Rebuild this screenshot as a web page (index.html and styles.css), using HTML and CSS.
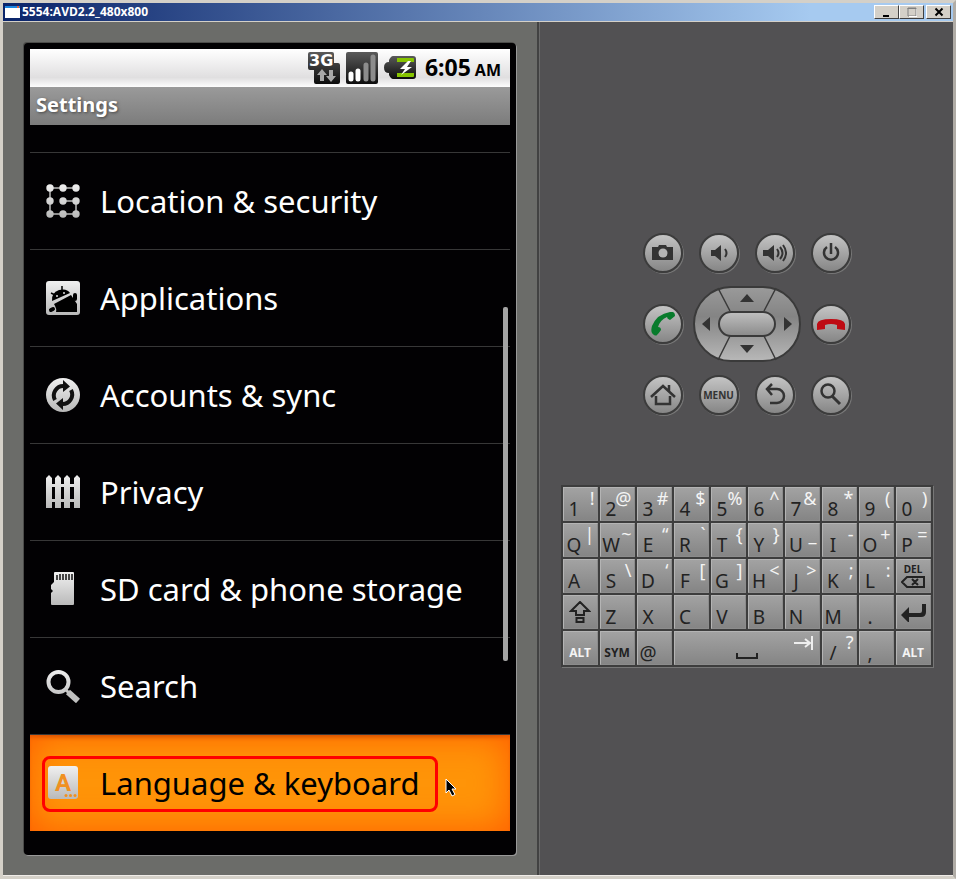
FILE: index.html
```
<!DOCTYPE html>
<html lang="en">
<head>
    <meta charset="UTF-8">
    <meta name="viewport" content="width=device-width, initial-scale=1.0">
    <title>5554:AVD2.2_480x800</title>
    <link rel="stylesheet" href="styles.css">
</head>
<body>
    <!-- shared gradients -->
    <svg class="defs" width="0" height="0" aria-hidden="true">
        <defs>
            <linearGradient id="silver" gradientUnits="userSpaceOnUse" x1="0" y1="0" x2="0" y2="34">
                <stop offset="0" stop-color="#f0f0f0"/>
                <stop offset="1" stop-color="#b8b8b8"/>
            </linearGradient>
            <linearGradient id="dark" x1="0" y1="0" x2="0" y2="1">
                <stop offset="0" stop-color="#5a5a5a"/>
                <stop offset="1" stop-color="#0c0c0c"/>
            </linearGradient>
            <linearGradient id="pad" x1="0" y1="0" x2="0" y2="1">
                <stop offset="0" stop-color="#9a9a9a"/>
                <stop offset="0.4" stop-color="#848484"/>
                <stop offset="1" stop-color="#b8b8b8"/>
            </linearGradient>
            <linearGradient id="pad-center" x1="0" y1="0" x2="0" y2="1">
                <stop offset="0" stop-color="#c0c0c0"/>
                <stop offset="1" stop-color="#8a8a8a"/>
            </linearGradient>
        </defs>
    </svg>

    <div class="window">
        <header class="titlebar">
            <svg class="app-icon" width="16" height="14" viewBox="0 0 16 14">
                <rect x="0" y="1" width="15" height="12" fill="#fff"/>
                <rect x="0" y="1" width="15" height="2" fill="#1c86e0"/>
                <rect x="12" y="1" width="2" height="2" fill="#e0603c"/>
            </svg>
            <span class="caption">5554:AVD2.2_480x800</span>
            <div class="window-buttons">
                <button aria-label="Minimize"><svg width="10" height="10"><rect x="1" y="8" width="6" height="2" fill="#000"/></svg></button>
                <button aria-label="Maximize"><svg width="10" height="10"><path d="M1 1h8v8h-8z" fill="none" stroke="#808080" stroke-width="1"/><path d="M0.5 1.5h9" stroke="#808080"/><path d="M2 9.5h8v-8" fill="none" stroke="#fff"/></svg></button>
                <button class="close" aria-label="Close"><svg width="10" height="10"><path d="M1.500 1.500l7 7M8.500 1.500l-7 7" stroke="#000" stroke-width="2"/></svg></button>
            </div>
        </header>

        <main class="emulator">
            <!-- phone -->
            <section class="phone-side">
                <div class="phone">
                    <div class="screen">
                        <div class="statusbar">
                            <svg width="32" height="32" viewBox="0 0 32 32">
                                <path d="M2 0h22q2 0 2 2v9h4q2 0 2 2v17q0 2-2 2h-22q-2 0-2-2v-12h-4q-2 0-2-2v-14q0-2 2-2z" fill="url(#dark)"/>
                                <text x="1" y="14" class="label-3g">3G</text>
                                <path d="M14 17l5 6h-3v6h-4v-6h-3zM23 30l-5-6h3v-6h4v6h3z" fill="#a8a8a8"/>
                            </svg>
                            <svg width="32" height="32" viewBox="0 0 32 32">
                                <rect width="32" height="32" rx="2" fill="url(#dark)"/>
                                <g stroke-width="5" stroke-linecap="round">
                                    <path d="M5 27v-5M12 27v-8" stroke="#fff"/>
                                    <path d="M20 27v-14M27 27v-22" stroke="#8c8c8c"/>
                                </g>
                            </svg>
                            <svg width="32" height="32" viewBox="0 0 32 32">
                                <path d="M9 4h20q3 0 3 3v17q0 3-3 3h-20q-2 0-4-4v-2q-5 0-5-5.500t5-5.500v-2q2-4 4-4z" fill="url(#dark)"/>
                                <path d="M13 6h16q1 0 1 1v3h-17zM13 21h17v3q0 1-1 1h-16z" fill="#86c400"/>
                                <path d="M24 9l-8 8h5l-4 6 11-8h-5l4-6z" fill="#fff"/>
                            </svg>
                            <div class="clock">6:05<small>AM</small></div>
                        </div>
                        <h1>Settings</h1>
                        <ul class="settings">
                            <li>
                                <a href="#">
                                    <svg width="34" height="34" viewBox="0 0 34 34">
                                        <path d="M4 4h26M4 4v26h26v-13h-13" fill="none" stroke="#bbb" stroke-width="1.500"/>
                                        <g fill="url(#silver)">
                                            <circle cx="4" cy="4" r="3.700"/><circle cx="17" cy="4" r="3.700"/><circle cx="30" cy="4" r="3.700"/>
                                            <circle cx="4" cy="17" r="3.700"/><circle cx="17" cy="17" r="3.700"/><circle cx="30" cy="17" r="3.700"/>
                                            <circle cx="4" cy="30" r="3.700"/><circle cx="17" cy="30" r="3.700"/><circle cx="30" cy="30" r="3.700"/>
                                        </g>
                                    </svg>
                                    Location &amp; security
                                </a>
                            </li>
                            <li>
                                <a href="#">
                                    <svg width="34" height="34" viewBox="0 0 34 34">
                                        <rect width="34" height="34" rx="3" fill="url(#silver)"/>
                                        <path d="M6 20q-1-8 7-11 8-2 11 3z"/>
                                        <path d="M8 23l17-9 6 9v8h-21q1-3-2-8z"/>
                                        <path d="M5 12l4 2M16 5v4" stroke="#000" stroke-width="1.500"/>
                                        <path d="M5 29l2-1M29 14v4" stroke="#000" stroke-width="4" stroke-linecap="round"/>
                                        <circle cx="11" cy="15" r="1" fill="#ddd"/><circle cx="18" cy="12" r="1" fill="#ddd"/>
                                    </svg>
                                    Applications
                                </a>
                            </li>
                            <li>
                                <a href="#">
                                    <svg width="34" height="34" viewBox="0 0 34 34">
                                        <circle cx="17" cy="17" r="17" fill="url(#silver)"/>
                                        <path d="M9 22a9.500 9.500 0 0 1 9-14M25 12a9.500 9.500 0 0 1-9 14" fill="none" stroke="#111" stroke-width="4"/>
                                        <path d="M17 2l7 6.500-7 5.500zM17 32l-7-6.500 7-5.500z" fill="#111"/>
                                    </svg>
                                    Accounts &amp; sync
                                </a>
                            </li>
                            <li>
                                <a href="#">
                                    <svg width="34" height="34" viewBox="0 0 34 34">
                                        <path fill="url(#silver)" d="M0 33v-30l3-3 3 3v30zM9 33v-30l3-3 3 3v30zM18 33v-30l3-3 3 3v30zM28 33v-30l3-3 3 3v30zM3 9h28v3h-28zM3 24h28v3h-28z"/>
                                    </svg>
                                    Privacy
                                </a>
                            </li>
                            <li>
                                <a href="#">
                                    <svg width="34" height="34" viewBox="0 0 34 34">
                                        <path fill="url(#silver)" d="M9 0h18q1 0 1 1v31q0 1-1 1h-21q-1 0-1-1v-11l2-2-2-2v-4l3-3v-9q0-1 1-1z"/>
                                        <path d="M11 3v5M14 2v6M17 2v6M20 2v6M23 2v6M26 2v6" stroke="#111" stroke-width="1.500"/>
                                    </svg>
                                    SD card &amp; phone storage
                                </a>
                            </li>
                            <li>
                                <a href="#">
                                    <svg width="34" height="34" viewBox="0 0 34 34">
                                        <circle cx="12.500" cy="13" r="10" fill="none" stroke="url(#silver)" stroke-width="4"/>
                                        <path d="M19 20l4 4" stroke="#c8c8c8" stroke-width="3"/>
                                        <path d="M22 23l10 9" stroke="#c0c0c0" stroke-width="6"/>
                                    </svg>
                                    Search
                                </a>
                            </li>
                            <li class="selected">
                                <a href="#">
                                    <svg width="34" height="34" viewBox="0 0 34 34">
                                        <rect x="2" y="0" width="30" height="33" rx="3" fill="url(#silver)"/>
                                        <text x="17" y="25" text-anchor="middle" class="label-a">A</text>
                                        <g fill="#f09020"><circle cx="20" cy="29.500" r="1.500"/><circle cx="24.500" cy="29.500" r="1.500"/><circle cx="29" cy="29.500" r="1.500"/></g>
                                    </svg>
                                    Language &amp; keyboard
                                </a>
                                <div class="marker"></div>
                                <svg class="pointer" width="13" height="20" viewBox="0 0 13 20">
                                    <path d="M1 1v14l3-3 3 6 3-1.500-3-5.500h4z" fill="#000" stroke="#fff"/>
                                </svg>
                            </li>
                        </ul>
                        <div class="scroll-thumb"></div>
                    </div>
                </div>
            </section>

            <!-- hardware buttons and keyboard -->
            <section class="hardware">
                <div class="controls">
                    <button class="round" aria-label="Camera">
                        <svg width="24" height="24" viewBox="0 0 24 24"><path d="M1 6h6l1-2h7l1 2h6v13h-21z"/><circle cx="12" cy="12" r="4.500" fill="#b4b4b4"/></svg>
                    </button>
                    <button class="round" aria-label="Volume down">
                        <svg width="24" height="24" viewBox="0 0 24 24"><path d="M4 9h4l6-5v16l-6-5h-4z"/><path d="M18 8q3 4 0 8" fill="none" stroke="#333" stroke-width="2"/></svg>
                    </button>
                    <button class="round" aria-label="Volume up">
                        <svg width="24" height="24" viewBox="0 0 24 24"><path d="M0 9h5l6-5v16l-6-5h-5z"/><path d="M14 8q3 4 0 8M17 6q5 6 0 12M20 4q6 8 0 16" fill="none" stroke="#333" stroke-width="2"/></svg>
                    </button>
                    <button class="round" aria-label="Power">
                        <svg width="24" height="24" viewBox="0 0 24 24"><path d="M8 6a7 7 0 1 0 8 0M12 2v11" fill="none" stroke="#333" stroke-width="2.500"/></svg>
                    </button>

                    <button class="round" aria-label="Call">
                        <svg width="24" height="24" viewBox="0 0 24 24"><path d="M3 23Q-1 21 1 14 6 2 19 0q5-1 5 4l-5 4q-3-1-3-3Q9 8 7 15q3 0 3 3-2 3-4 5-1 1-3 0z" fill="#087b2c"/></svg>
                    </button>
                    <div class="dpad">
                        <svg class="dpad-shape" width="108" height="76" viewBox="0 0 108 76">
                            <rect x="1" y="1" width="106" height="74" rx="37" fill="url(#pad)" stroke="#3a3a3a" stroke-width="2"/>
                            <path d="M25 2l12 23M83 2l-12 23M25 74l12-24M83 74l-12-24" stroke="#3a3a3a" stroke-width="1.500"/>
                            <rect x="26" y="26" width="56" height="24" rx="12" fill="url(#pad-center)" stroke="#3a3a3a" stroke-width="2"/>
                        </svg>
                        <button class="up" aria-label="Up"><svg width="14" height="8"><path d="M0 8l7-8 7 8z"/></svg></button>
                        <button class="left" aria-label="Left"><svg width="8" height="14"><path d="M8 0l-8 7 8 7z"/></svg></button>
                        <button class="ok" aria-label="Center"></button>
                        <button class="right" aria-label="Right"><svg width="8" height="14"><path d="M0 0l8 7-8 7z"/></svg></button>
                        <button class="down" aria-label="Down"><svg width="14" height="8"><path d="M0 0l7 8 7-8z"/></svg></button>
                    </div>
                    <button class="round" aria-label="End call">
                        <svg width="28" height="24" viewBox="0 0 28 24"><path d="M0 12Q1 7 14 7t14 5v6l-8-1v-4q-6-2-12 0v4l-8 1z" fill="#be0b14"/></svg>
                    </button>

                    <button class="round" aria-label="Home">
                        <svg width="26" height="24" viewBox="0 0 26 24"><path d="M1 14l12-11 12 11M19 8v-6M6 13v8h14v-8" fill="none" stroke="#333" stroke-width="2.500"/></svg>
                    </button>
                    <button class="round">MENU</button>
                    <button class="round" aria-label="Back">
                        <svg width="24" height="24" viewBox="0 0 24 24"><path d="M9 1l-5 5 5 6M4 6h10a7 7 0 0 1 0 14h-7" fill="none" stroke="#333" stroke-width="2.500"/></svg>
                    </button>
                    <button class="round" aria-label="Search">
                        <svg width="24" height="24" viewBox="0 0 24 24"><circle cx="9" cy="8" r="6.500" fill="none" stroke="#333" stroke-width="2.500"/><path d="M13 13l8 8" stroke="#333" stroke-width="3"/></svg>
                    </button>
                </div>

                <div class="keyboard">
                    <button><b>1</b><i>!</i></button>
                    <button><b>2</b><i>@</i></button>
                    <button><b>3</b><i>#</i></button>
                    <button><b>4</b><i>$</i></button>
                    <button><b>5</b><i>%</i></button>
                    <button><b>6</b><i>^</i></button>
                    <button><b>7</b><i>&amp;</i></button>
                    <button><b>8</b><i>*</i></button>
                    <button><b>9</b><i>(</i></button>
                    <button><b>0</b><i>)</i></button>

                    <button><b>Q</b><i>|</i></button>
                    <button><b>W</b><i>~</i></button>
                    <button><b>E</b><i>“</i></button>
                    <button><b>R</b><i>`</i></button>
                    <button><b>T</b><i>{</i></button>
                    <button><b>Y</b><i>}</i></button>
                    <button><b>U</b><i>_</i></button>
                    <button><b>I</b><i>-</i></button>
                    <button><b>O</b><i>+</i></button>
                    <button><b>P</b><i>=</i></button>

                    <button><b>A</b></button>
                    <button><b>S</b><i>\</i></button>
                    <button><b>D</b><i>‘</i></button>
                    <button><b>F</b><i>[</i></button>
                    <button><b>G</b><i>]</i></button>
                    <button><b>H</b><i>&lt;</i></button>
                    <button><b>J</b><i>&gt;</i></button>
                    <button><b>K</b><i>;</i></button>
                    <button><b>L</b><i>:</i></button>
                    <button class="del">
                        DEL
                        <svg width="24" height="12" viewBox="0 0 24 12"><path d="M1 6l5-5h17v10h-17zM11 3l6 6M17 3l-6 6" fill="none" stroke="#222" stroke-width="2"/></svg>
                    </button>

                    <button class="icon-key" aria-label="Shift">
                        <svg width="22" height="22" viewBox="0 0 22 22"><path d="M11 1l9 9h-5v4h-8v-4h-5zM7.500 17h7v4h-7z" fill="none" stroke="#222" stroke-width="2"/></svg>
                    </button>
                    <button><b>Z</b></button>
                    <button><b>X</b></button>
                    <button><b>C</b></button>
                    <button><b>V</b></button>
                    <button><b>B</b></button>
                    <button><b>N</b></button>
                    <button><b>M</b></button>
                    <button><b>.</b></button>
                    <button class="icon-key" aria-label="Enter">
                        <svg width="26" height="20" viewBox="0 0 26 20"><path d="M1 13l8-8v6h11q2 0 2-2v-7h4v8q0 5-5 5h-12v6z" fill="#222"/></svg>
                    </button>

                    <button class="word light">ALT</button>
                    <button class="word">SYM</button>
                    <button><b>@</b></button>
                    <button class="space" aria-label="Space">
                        <svg width="22" height="6" viewBox="0 0 22 6"><path d="M1 0v5h20v-5" fill="none" stroke="#222" stroke-width="2"/></svg>
                        <svg class="tab" width="20" height="14" viewBox="0 0 20 14"><path d="M0 7h15M11 3l5 4-5 4M18 0v14" fill="none" stroke="#eee" stroke-width="2"/></svg>
                    </button>
                    <button><b>/</b><i>?</i></button>
                    <button><b>,</b></button>
                    <button class="word light">ALT</button>
                </div>
            </section>
        </main>
    </div>
</body>
</html>
```

FILE: styles.css
```
* {
    box-sizing: border-box;
}

body {
    margin: 0;
    font-family: "Noto Sans", "Open Sans", sans-serif;
    background-color: #d4d0c8;
}

button {
    margin: 0;
    padding: 0;
    font-family: inherit;
    cursor: pointer;
}

svg {
    display: block;
    flex: none;
}

.defs {
    position: absolute;
}

.window {
    display: flex;
    flex-direction: column;
    min-height: 100vh;
    border: 3px solid #d4d0c8;
    border-right-color: #b0aca6;
}

/* title bar */
.titlebar {
    display: flex;
    align-items: center;
    height: 19px;
    padding: 0 2px;
    background: linear-gradient(to right, #0a246a, #a6caf0 85%);
    border-bottom: 1px solid #d4d0c8;
}

.caption {
    flex: 1;
    margin-left: 1px;
    color: #fff;
    font: bold 12px/18px "Open Sans", "Noto Sans", sans-serif;
}

.window-buttons {
    display: flex;
}

.window-buttons button {
    display: flex;
    align-items: center;
    justify-content: center;
    width: 25px;
    height: 14px;
    background-color: #d4d0c8;
    border: 1px solid;
    border-color: #fff #404040 #404040 #fff;
}

.window-buttons .close {
    margin-left: 2px;
}

.emulator {
    display: flex;
    flex: 1;
    border-bottom: 1px solid #f0ece8;
}

/* phone */
.phone-side {
    padding: 21px 21px 20px;
    background-color: #6b6c69;
    border-right: 2px solid #424242;
}

.phone {
    padding: 6px;
    background-color: #020103;
    border-radius: 4px;
    box-shadow: 1px 1px 0 #999, -1px -1px 0 #4c4c4a;
}

.screen {
    position: relative;
    width: 480px;
    padding-bottom: 18px;
}

.statusbar {
    display: flex;
    align-items: center;
    justify-content: flex-end;
    gap: 6px;
    height: 38px;
    padding-right: 9px;
    background: linear-gradient(#fff, #e0dfe0 75%, #fdfdfd);
}

.label-3g {
    fill: #fff;
    font: bold 16px "DejaVu Sans", sans-serif;
}

.label-a {
    fill: #f09020;
    font: bold 24px Roboto, sans-serif;
}

.clock {
    margin-left: 3px;
    font-size: 23px;
    font-weight: bold;
    line-height: 40px;
}

.clock small {
    margin-left: 4px;
    font-size: 16px;
}

h1 {
    margin: 0;
    padding: 0 6px;
    height: 38px;
    color: #fff;
    font-size: 20px;
    line-height: 36px;
    text-shadow: 1px 1px 3px #444;
    background: linear-gradient(#9a9a9a, #7c7c7c);
}

.settings {
    margin: 0;
    padding: 27px 0 0;
    list-style: none;
}

.settings li {
    position: relative;
    border-top: 1px solid #373737;
}

.settings a {
    display: flex;
    align-items: center;
    gap: 20px;
    height: 96px;
    padding: 0 16px;
    color: #fff;
    font-size: 31px;
    white-space: nowrap;
    text-decoration: none;
}

.settings .selected {
    background-color: #ff9408;
    box-shadow: inset 0 0 36px #ff5c00, inset 0 4px 4px -2px #a84000;
}

.selected a {
    color: #000;
}

.marker {
    position: absolute;
    top: 21px;
    left: 12px;
    width: 396px;
    height: 56px;
    border: 3px solid #f00;
    border-radius: 8px;
}

.pointer {
    position: absolute;
    top: 43px;
    left: 415px;
}

.scroll-thumb {
    position: absolute;
    top: 258px;
    right: 2px;
    width: 5px;
    height: 354px;
    background-color: #a4a4a4;
    border-radius: 2px;
}

/* hardware side */
.hardware {
    display: flex;
    flex: 1;
    flex-direction: column;
    align-items: center;
    justify-content: center;
    gap: 70px;
    padding-top: 2px;
    background-color: #525153;
    border-left: 1px solid #6a6a6a;
}

.controls {
    display: grid;
    grid-template-columns: repeat(4, 56px);
    row-gap: 13px;
    align-items: center;
    justify-items: center;
}

.round {
    display: flex;
    align-items: center;
    justify-content: center;
    width: 40px;
    height: 40px;
    color: #333;
    font-size: 10px;
    font-weight: bold;
    background: linear-gradient(#c4c4c4, #868686);
    border: 2px solid #3c3c3c;
    border-radius: 50%;
    box-shadow: 1px 1px 0 #777;
}

.round svg,
.dpad button svg {
    fill: #333;
}

.dpad {
    position: relative;
    display: grid;
    grid-column: span 2;
    grid-template-columns: 26px 56px 26px;
    grid-template-rows: 25px 26px 25px;
    grid-template-areas:
        ". up ."
        "left ok right"
        ". down .";
}

.dpad-shape {
    position: absolute;
    top: 0;
    left: 0;
}

.dpad button {
    display: flex;
    align-items: center;
    justify-content: center;
    position: relative;
    background: none;
    border: none;
}

.up { grid-area: up; }
.left { grid-area: left; }
.ok { grid-area: ok; }
.right { grid-area: right; }
.down { grid-area: down; }

/* keyboard */
.keyboard {
    display: grid;
    grid-template-columns: repeat(10, 35px);
    grid-auto-rows: 34px;
    gap: 2px;
    padding: 2px;
    background-color: #3d3d3d;
    box-shadow: 1px 1px 0 #777;
}

.keyboard button {
    display: grid;
    grid-template-columns: 1fr;
    grid-template-rows: 100%;
    color: #222;
    background: linear-gradient(#a2a2a2, #858585);
    border: 1px solid;
    border-color: #b4b4b4 #8c8c8c #8c8c8c #b4b4b4;
}

.keyboard b,
.keyboard i {
    grid-area: 1 / 1;
    font-style: normal;
    font-weight: normal;
}

.keyboard b {
    align-self: end;
    width: 21px;
    font-size: 19px;
    line-height: 22px;
    text-align: center;
}

.keyboard i {
    align-self: start;
    justify-self: end;
    padding-right: 2px;
    color: #f4f4f4;
    font-size: 18px;
    line-height: 20px;
}

.keyboard .del,
.keyboard .icon-key {
    align-content: center;
    justify-items: center;
    grid-template-rows: auto;
    font-size: 10px;
    font-weight: bold;
    line-height: 13px;
}

.keyboard .word {
    align-items: end;
    justify-items: center;
    padding-bottom: 3px;
    font-size: 12px;
    font-weight: bold;
    line-height: 16px;
}

.keyboard .light {
    color: #f4f4f4;
}

.keyboard .space {
    position: relative;
    grid-column: span 4;
    align-items: end;
    justify-items: center;
    padding-bottom: 5px;
}

.tab {
    position: absolute;
    top: 4px;
    right: 5px;
}
```
